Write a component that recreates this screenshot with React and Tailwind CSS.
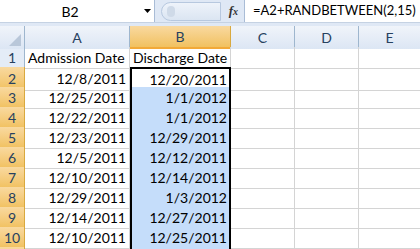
import React from 'react';

const rows = [
  ['12/8/2011', '12/20/2011'],
  ['12/25/2011', '1/1/2012'],
  ['12/22/2011', '1/1/2012'],
  ['12/23/2011', '12/29/2011'],
  ['12/5/2011', '12/12/2011'],
  ['12/10/2011', '12/14/2011'],
  ['12/29/2011', '1/3/2012'],
  ['12/14/2011', '12/27/2011'],
  ['12/10/2011', '12/25/2011'],
  ['', ''],
];

const cols = 'grid grid-cols-[25px_105px_101px_64px_64px_1fr]';

export default function App() {
  return (
    <div className="w-[420px] h-[249px] overflow-hidden bg-white text-[14px] text-black" style={{ fontFamily: 'Lato, "Open Sans", sans-serif' }}>
      {/* formula bar */}
      <div className="flex h-[23px] bg-[#dfe8f5] border-b border-[#c5d2e3]">
        <div className="w-[155px] bg-white border-r border-[#a9bcd6] flex items-center relative">
          <span className="w-full text-center pr-[14px]">B2</span>
          <svg className="absolute right-[2px] top-[9px]" width="8" height="5" viewBox="0 0 8 5">
            <path d="M0 0h7L3.5 4z" fill="#000" />
          </svg>
        </div>
        <div className="flex-1 flex items-center pl-[6px] pr-[6px]">
          <div className="h-[19px] flex-1 rounded-l-full border border-[#b7c8df] bg-gradient-to-b from-[#eef3fa] to-[#dbe5f2] relative">
            <div className="absolute left-[5px] top-[3px] w-[8px] h-[11px] rounded-full bg-[#cfdae8]" />
          </div>
          <span className="ml-[8px] italic font-bold text-[13px] text-[#333]" style={{ fontFamily: '"Liberation Serif", serif' }}>
            f<span className="text-[10px]">x</span>
          </span>
        </div>
        <div className="w-[176px] bg-white border-l border-[#a9bcd6] flex items-center pl-[8px] whitespace-nowrap text-[13px]">
          =A2+RANDBETWEEN(2,15)
        </div>
      </div>
      <div className="h-[3px] bg-[#dfe8f5]" />

      {/* column headers */}
      <div className={`${cols} h-[21px] border-b border-[#9eb6ce]`}>
        <div className="bg-gradient-to-b from-[#f0f4fa] to-[#dce6f4] border-r border-[#9eb6ce] relative">
          <svg className="absolute right-[3px] bottom-[3px]" width="12" height="12" viewBox="0 0 12 12">
            <path d="M12 0V12H0z" fill="#b9c7d9" />
          </svg>
        </div>
        <div className="bg-gradient-to-b from-[#f0f4fa] to-[#dce6f4] border-r border-[#9eb6ce] flex items-center justify-center text-[#27415f]">A</div>
        <div className="bg-gradient-to-b from-[#f9d99f] to-[#f1c15f] border-r border-[#d9a93f] flex items-center justify-center text-[#27415f] border-b-2 border-b-[#f2a938]">B</div>
        <div className="bg-gradient-to-b from-[#f0f4fa] to-[#dce6f4] border-r border-[#9eb6ce] flex items-center justify-center text-[#27415f]">C</div>
        <div className="bg-gradient-to-b from-[#f0f4fa] to-[#dce6f4] border-r border-[#9eb6ce] flex items-center justify-center text-[#27415f]">D</div>
        <div className="bg-gradient-to-b from-[#f0f4fa] to-[#dce6f4] flex items-center justify-center text-[#27415f]">E</div>
      </div>

      {/* row 1 */}
      <div className={`${cols} h-[20px]`}>
        <div className="bg-[#e4ecf7] border-r border-b border-[#9eb6ce] flex items-center justify-center text-[#27415f]">1</div>
        <div className="border-r border-b border-[#d4d4d4] flex items-center pl-[3px] whitespace-nowrap">Admission Date</div>
        <div className="border-r border-b border-[#d4d4d4] flex items-center pl-[3px] whitespace-nowrap">Discharge Date</div>
        <div className="border-r border-b border-[#d4d4d4]" />
        <div className="border-r border-b border-[#d4d4d4]" />
        <div className="border-b border-[#d4d4d4]" />
      </div>

      {rows.map((r, i) => {
        const n = i + 2;
        return (
          <div key={n} className={`${cols} h-[20px]`}>
            <div className="bg-gradient-to-b from-[#f9d99f] to-[#f1c15f] border-[#d9a93f] border-r border-b flex items-center justify-center text-[#27415f]">{n <= 10 ? n : ''}</div>
            <div className="border-r border-b border-[#d4d4d4] flex items-center justify-end pr-[3px]">{r[0]}</div>
            <div className={`${n === 2 ? 'bg-white border-t-2' : 'bg-[#c5ddfa]'} border-x-2 border-black flex items-center justify-end pr-[2px] border-b border-b-[#c5ddfa]`}>{r[1]}</div>
            <div className="border-r border-b border-[#d4d4d4]" />
            <div className="border-r border-b border-[#d4d4d4]" />
            <div className="border-b border-[#d4d4d4]" />
          </div>
        );
      })}
    </div>
  );
}
